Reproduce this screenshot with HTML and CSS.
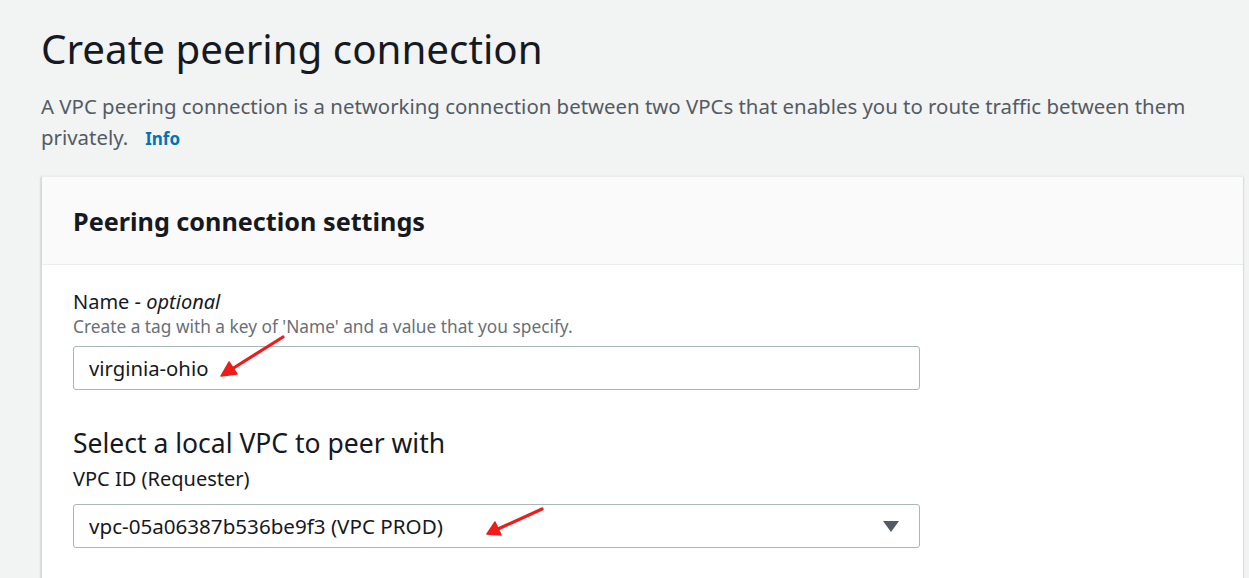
FILE: index.html
```html
<!DOCTYPE html>
<html>
<head>
<meta charset="utf-8">
<link rel="stylesheet" href="styles.css">
</head>
<body>
<div class="page">
  <h1 class="title">Create peering connection</h1>
  <p class="desc">A VPC peering connection is a networking connection between two VPCs that enables you to route traffic between them privately.<a class="info" href="#">Info</a></p>
  <section class="card">
    <header class="card-head">
      <h2 class="card-title">Peering connection settings</h2>
    </header>
    <div class="card-body">
      <div class="field">
        <div class="label">Name - <em>optional</em></div>
        <div class="hint">Create a tag with a key of 'Name' and a value that you specify.</div>
        <div class="input">virginia-ohio</div>
      </div>
      <h3 class="sub">Select a local VPC to peer with</h3>
      <div class="field">
        <div class="label">VPC ID (Requester)</div>
        <div class="input select">
          <span>vpc-05a06387b536be9f3 (VPC PROD)</span>
          <svg class="caret" width="18" height="13" viewBox="0 0 18 13"><path d="M1 1 H17 L9 12 Z" fill="#545b64"/></svg>
        </div>
      </div>
    </div>
  </section>
</div>
<svg class="annot" width="1249" height="578" viewBox="0 0 1249 578">
  <g stroke="#ee1c1c" stroke-width="3.2" stroke-linecap="round" fill="#ee1c1c">
    <line x1="283" y1="337" x2="232" y2="369"/>
    <path d="M221 376 L229 362 L237 374 Z" stroke-width="1.5" stroke-linejoin="round"/>
    <line x1="542" y1="509" x2="498" y2="529"/>
    <path d="M487 534 L495 522 L501 535 Z" stroke-width="1.5" stroke-linejoin="round"/>
  </g>
</svg>
</body>
</html>
```

FILE: styles.css
```css
* { box-sizing: border-box; }
html, body { margin: 0; padding: 0; }
body {
  background: #f2f3f3;
  font-family: "Noto Sans", "Open Sans", sans-serif;
  color: #16191f;
  width: 1249px;
  height: 578px;
  overflow: hidden;
  position: relative;
}
.page {
  padding: 0 6px 0 41px;
}
.title {
  margin: 0;
  padding-top: 23px;
  font-size: 40.3px;
  line-height: 52px;
  font-weight: 400;
  color: #16191f;
}
.desc {
  margin: 16px 0 0 0;
  font-size: 20.4px;
  line-height: 31px;
  color: #545b64;
}
.info {
  display: inline-block;
  line-height: 20px;
  color: #0073bb;
  font-weight: 700;
  font-size: 17px;
  text-decoration: none;
  margin-left: 17px;
}
.card {
  margin-top: 23px;
  background: #fff;
  border-left: 1px solid #d5dbdb;
  border-top: 1px solid #eaeded;
  box-shadow: 0 1px 2px rgba(0,28,36,0.3);
  height: 420px;
}
.card-head {
  background: #fafafa;
  border-bottom: 1px solid #eaeded;
  height: 88px;
  display: flex;
  align-items: center;
  padding: 0 31px;
}
.card-title {
  margin: 0;
  font-size: 25.2px;
  font-weight: 700;
  color: #16191f;
}
.card-body {
  padding: 23px 31px;
}
.label {
  font-size: 20px;
  line-height: 28px;
  color: #16191f;
}
.hint {
  font-size: 17.3px;
  line-height: 22px;
  color: #687078;
}
.input {
  margin-top: 8px;
  width: 847px;
  height: 44px;
  border: 1px solid #aab7b8;
  border-radius: 3px;
  background: #fff;
  padding: 0 15px;
  display: flex;
  align-items: center;
  font-size: 20.3px;
  color: #16191f;
}
.select { justify-content: space-between; margin-top: 11px; font-size: 20.6px; }
.caret { margin-right: 4px; }
.sub {
  margin: 37px 0 6px 0;
  font-size: 26.5px;
  line-height: 32px;
  font-weight: 400;
  color: #16191f;
}
.annot {
  position: absolute;
  left: 0;
  top: 0;
  pointer-events: none;
}
```
